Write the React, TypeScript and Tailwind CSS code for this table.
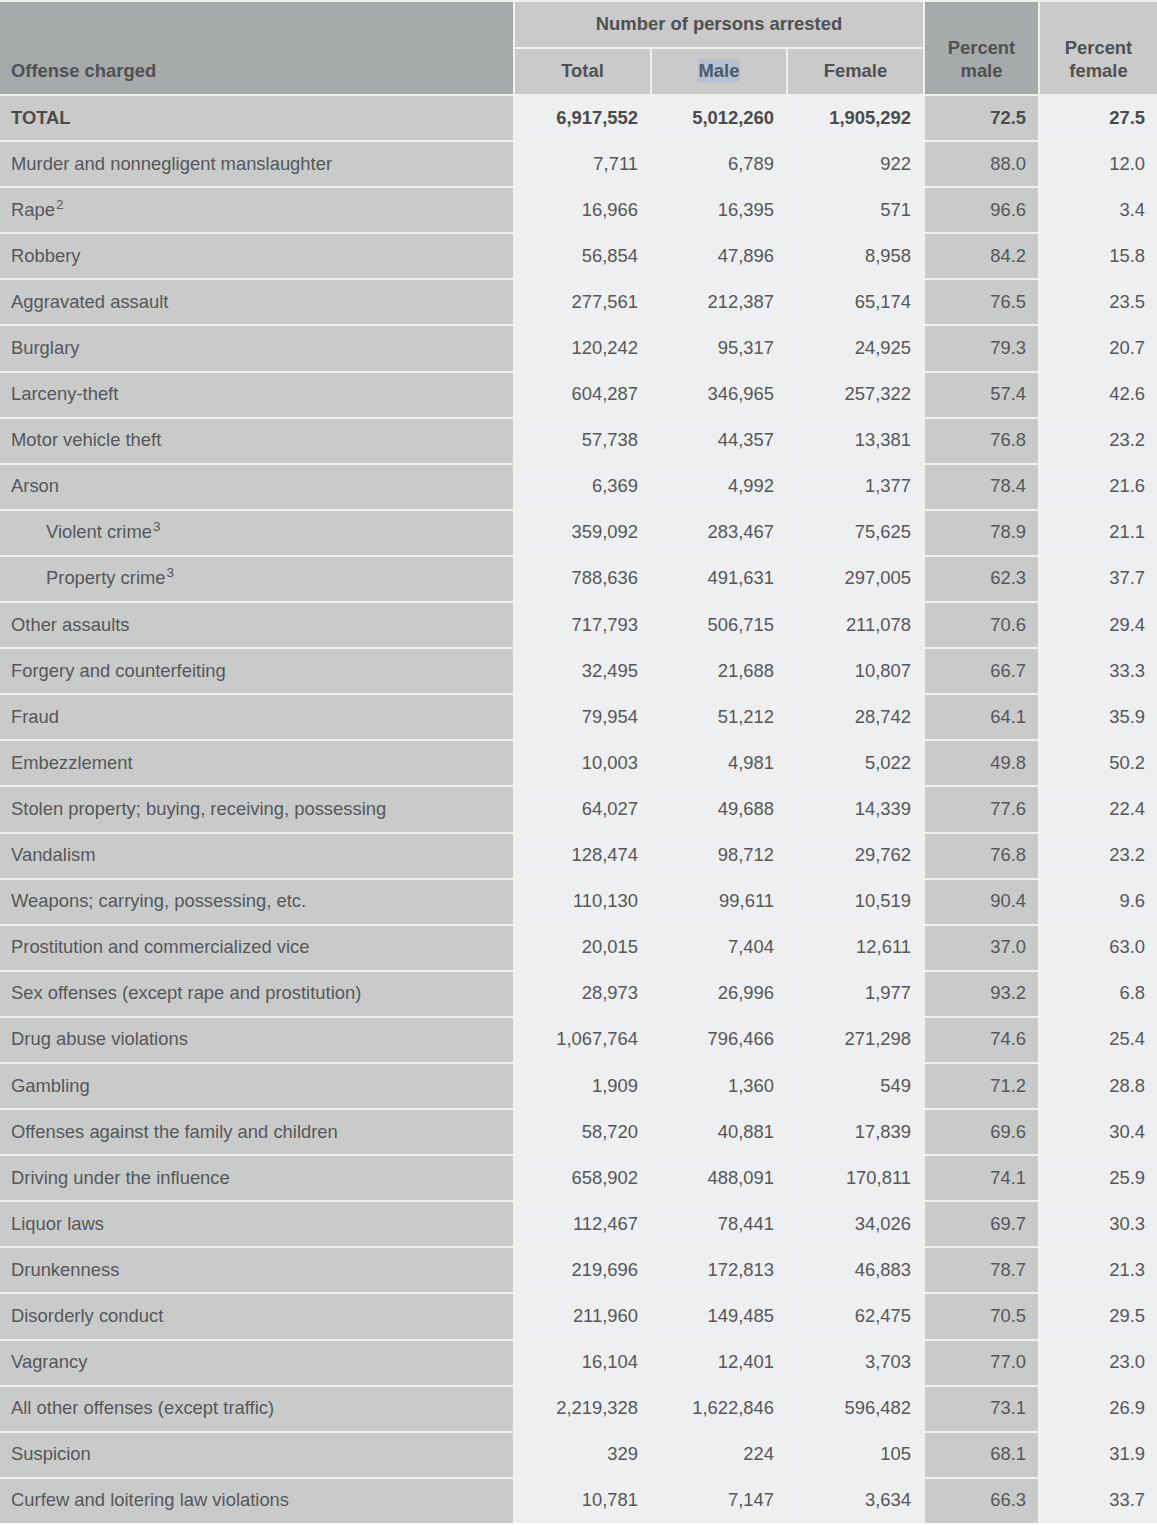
import React from "react";

type Row = { name: React.ReactNode; indent?: boolean; bold?: boolean; v: string[] };

const Sup = ({ n }: { n: string }) => (
  <sup className="text-[13.5px] relative -top-[7px] align-baseline ml-[1px]">{n}</sup>
);

const rows: Row[] = [
  { name: "TOTAL", bold: true, v: ["6,917,552", "5,012,260", "1,905,292", "72.5", "27.5"] },
  { name: "Murder and nonnegligent manslaughter", v: ["7,711", "6,789", "922", "88.0", "12.0"] },
  { name: <>Rape<Sup n="2" /></>, v: ["16,966", "16,395", "571", "96.6", "3.4"] },
  { name: "Robbery", v: ["56,854", "47,896", "8,958", "84.2", "15.8"] },
  { name: "Aggravated assault", v: ["277,561", "212,387", "65,174", "76.5", "23.5"] },
  { name: "Burglary", v: ["120,242", "95,317", "24,925", "79.3", "20.7"] },
  { name: "Larceny-theft", v: ["604,287", "346,965", "257,322", "57.4", "42.6"] },
  { name: "Motor vehicle theft", v: ["57,738", "44,357", "13,381", "76.8", "23.2"] },
  { name: "Arson", v: ["6,369", "4,992", "1,377", "78.4", "21.6"] },
  { name: <>Violent crime<Sup n="3" /></>, indent: true, v: ["359,092", "283,467", "75,625", "78.9", "21.1"] },
  { name: <>Property crime<Sup n="3" /></>, indent: true, v: ["788,636", "491,631", "297,005", "62.3", "37.7"] },
  { name: "Other assaults", v: ["717,793", "506,715", "211,078", "70.6", "29.4"] },
  { name: "Forgery and counterfeiting", v: ["32,495", "21,688", "10,807", "66.7", "33.3"] },
  { name: "Fraud", v: ["79,954", "51,212", "28,742", "64.1", "35.9"] },
  { name: "Embezzlement", v: ["10,003", "4,981", "5,022", "49.8", "50.2"] },
  { name: "Stolen property; buying, receiving, possessing", v: ["64,027", "49,688", "14,339", "77.6", "22.4"] },
  { name: "Vandalism", v: ["128,474", "98,712", "29,762", "76.8", "23.2"] },
  { name: "Weapons; carrying, possessing, etc.", v: ["110,130", "99,611", "10,519", "90.4", "9.6"] },
  { name: "Prostitution and commercialized vice", v: ["20,015", "7,404", "12,611", "37.0", "63.0"] },
  { name: "Sex offenses (except rape and prostitution)", v: ["28,973", "26,996", "1,977", "93.2", "6.8"] },
  { name: "Drug abuse violations", v: ["1,067,764", "796,466", "271,298", "74.6", "25.4"] },
  { name: "Gambling", v: ["1,909", "1,360", "549", "71.2", "28.8"] },
  { name: "Offenses against the family and children", v: ["58,720", "40,881", "17,839", "69.6", "30.4"] },
  { name: "Driving under the influence", v: ["658,902", "488,091", "170,811", "74.1", "25.9"] },
  { name: "Liquor laws", v: ["112,467", "78,441", "34,026", "69.7", "30.3"] },
  { name: "Drunkenness", v: ["219,696", "172,813", "46,883", "78.7", "21.3"] },
  { name: "Disorderly conduct", v: ["211,960", "149,485", "62,475", "70.5", "29.5"] },
  { name: "Vagrancy", v: ["16,104", "12,401", "3,703", "77.0", "23.0"] },
  { name: "All other offenses (except traffic)", v: ["2,219,328", "1,622,846", "596,482", "73.1", "26.9"] },
  { name: "Suspicion", v: ["329", "224", "105", "68.1", "31.9"] },
  { name: "Curfew and loitering law violations", v: ["10,781", "7,147", "3,634", "66.3", "33.7"] },
];

export default function App() {
  return (
    <div
      className="w-[1157px] bg-[#f1f1eb] pt-[2px] text-[18.4px] leading-[23px] text-[#56575a]"
      style={{ fontFamily: '"Liberation Sans", Arial, sans-serif' }}
    >
      <div className="grid grid-cols-[513px_135px_134px_135px_113px_117px] grid-rows-[45px_45px] gap-[2px]">
        <div className="row-span-2 bg-[#a6aaab] font-bold text-[#4f5152] flex items-end pl-[11px] pb-[12px]">
          Offense charged
        </div>
        <div className="col-span-3 bg-[#c9cac9] font-bold text-[#4f5152] flex items-center justify-center pb-[2px]">
          Number of persons arrested
        </div>
        <div className="row-span-2 bg-[#a6aaab] font-bold text-[#4f5152] flex items-end justify-center text-center pb-[12px]">
          Percent
          <br />
          male
        </div>
        <div className="row-span-2 bg-[#c9cac9] font-bold text-[#4f5152] flex items-end justify-center text-center pb-[12px]">
          Percent
          <br />
          female
        </div>
        <div className="bg-[#c9cac9] font-bold text-[#4f5152] flex items-center justify-center pb-[2px]">Total</div>
        <div className="bg-[#c9cac9] font-bold text-[#4f5152] flex items-center justify-center pb-[2px]">
          <span className="bg-[#b5c1d0] text-[#4d5a6e] px-[1px]">Male</span>
        </div>
        <div className="bg-[#c9cac9] font-bold text-[#4f5152] flex items-center justify-center pb-[2px]">Female</div>
      </div>
      <div className="grid grid-cols-[513px_135px_134px_135px_113px_117px] gap-[2px] pt-[2px]">
        {rows.map((r, i) => (
          <React.Fragment key={i}>
            <div
              className={`h-[44.1px] bg-[#c9cbca] flex items-center pb-[2px] ${r.indent ? "pl-[46px]" : "pl-[11px]"} ${
                r.bold ? "font-bold text-[#4a4b4c]" : ""
              }`}
            >
              <span>{r.name}</span>
            </div>
            {r.v.map((val, j) => (
              <div
                key={j}
                className={`h-[44.1px] flex items-center justify-end pr-[12px] pb-[2px] ${
                  j === 3 ? "bg-[#c9cbca]" : "bg-[#eeeff0]"
                } ${r.bold ? "font-bold text-[#4a4b4c]" : ""}`}
              >
                {val}
              </div>
            ))}
          </React.Fragment>
        ))}
      </div>
    </div>
  );
}
